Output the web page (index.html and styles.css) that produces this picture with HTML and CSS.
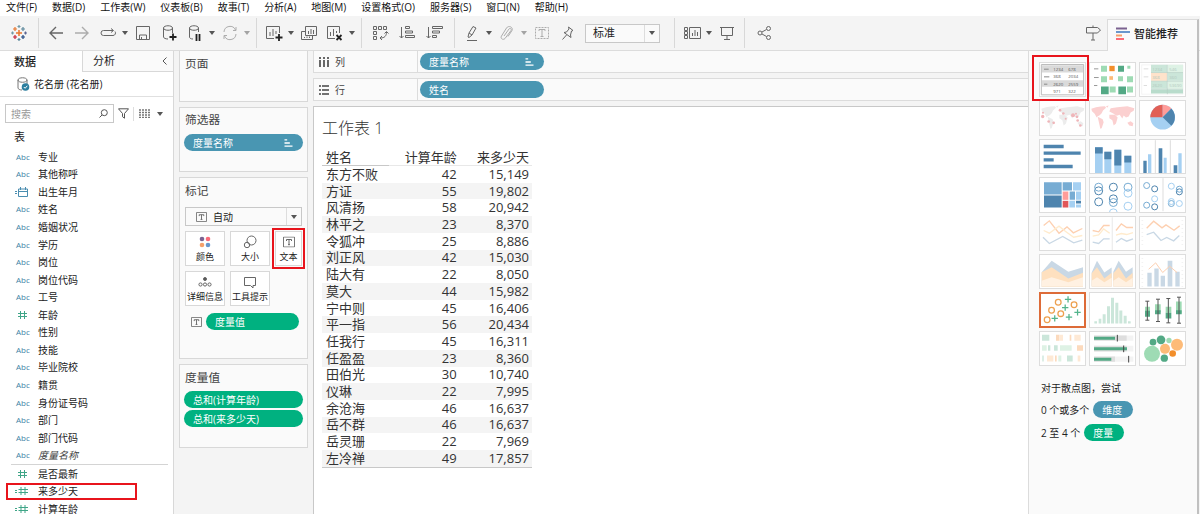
FILE: index.html
```html
<!DOCTYPE html>
<html lang="zh-CN">
<head>
  <meta charset="UTF-8">
  <meta name="viewport" content="width=device-width, initial-scale=1.0">
  <title>工作表 1</title>
  <link rel="stylesheet" href="styles.css">
</head>
<body>
  <svg class="defs" aria-hidden="true">
    <symbol id="i-caret" viewBox="0 0 6 4"><path d="M0 0h6L3 4z" fill="currentColor"/></symbol>
    <symbol id="i-num" viewBox="0 0 14 10"><path d="M5.500 1v8M9.500 1v8M3 3.500h9M3 6.500h9" fill="none" stroke="#3fa587"/></symbol>
    <symbol id="i-calc" viewBox="0 0 14 10"><path d="M6 1v8M10 1v8M3.500 3.500H13M3.500 6.500H13M0 4.500h2M0 6.500h2" fill="none" stroke="#3fa587"/></symbol>
    <symbol id="i-date" viewBox="0 0 14 10"><path d="M3.500 2h9v7.500h-9zM3.500 4.500h9M5.500 0v3M10.500 0v3M0 4.500h2M0 6.500h2" fill="none" stroke="#4a8db0"/></symbol>
    <symbol id="i-text" viewBox="0 0 12 11"><path d="M.5.5h11v10H.5z" fill="none" stroke="#777"/><path d="M3.500 4.500v-1.500h5v1.500M6 3v5M5 8.200h2" fill="none" stroke="#555" stroke-width=".9"/></symbol>
    <symbol id="i-sorted" viewBox="0 0 9 9"><path d="M0 1h3M0 4.500h6M0 8h9" stroke="#fff" stroke-width="1.600"/></symbol>
    <symbol id="i-map" viewBox="0 0 135 99">
      <path d="M4 26l14-5 14-2 13-1 3 5-9 8-4 8-6 6-7 4-2 3-6-11-8-8zM23 50l15 7 3 9-6 18-4 2-4-18zM58 34l4-10 20-3 30-3 21 6-2 8-9 5-6 12-8 3-7-6-4 9-8-11-9 3-9-6zM58 44h17l8 8-5 18-7 6-4-16-9-6zM112 68l10-5 8 6-2 9-10-2zM48 18l8-2-4 7z"/>
    </symbol>
  </svg>

  <nav class="menu">
    <a href="#">文件(F)</a>
    <a href="#">数据(D)</a>
    <a href="#">工作表(W)</a>
    <a href="#">仪表板(B)</a>
    <a href="#">故事(T)</a>
    <a href="#">分析(A)</a>
    <a href="#">地图(M)</a>
    <a href="#">设置格式(O)</a>
    <a href="#">服务器(S)</a>
    <a href="#">窗口(N)</a>
    <a href="#">帮助(H)</a>
  </nav>

  <header class="toolbar">
    <div class="group logo">
      <button class="tool" aria-label="开始">
        <svg viewBox="0 0 18 18" fill="none" stroke-width="1.200">
          <path d="M9 6v6M6 9h6" stroke="#e8762d" stroke-width="1.500"/>
          <path d="M5 3v4M3 5h4" stroke="#e8762d"/><path d="M13 3v4M11 5h4" stroke="#5b879b"/>
          <path d="M5 11v4M3 13h4" stroke="#c72035"/><path d="M13 11v4M11 13h4" stroke="#1f447e"/>
          <path d="M9 1v3M7.500 2.500h3" stroke="#7099a6"/><path d="M9 14v3M7.500 15.500h3" stroke="#59879b"/>
          <path d="M2.500 7.500v3M1 9h3" stroke="#7099a6"/><path d="M15.500 7.500v3M14 9h3" stroke="#5c6692"/>
        </svg>
      </button>
    </div>
    <div class="group">
      <button class="tool" aria-label="后退"><svg viewBox="0 0 18 18"><path d="M16 9H3M9 3L3 9l6 6" stroke-width="1.400"/></svg></button>
      <button class="tool off" aria-label="前进"><svg viewBox="0 0 18 18"><path d="M2 9h13M9 3l6 6-6 6" stroke-width="1.400"/></svg></button>
      <button class="tool" aria-label="重播"><svg viewBox="0 0 18 18"><path d="M14 6.500H4.500a2.500 2.500 0 0 0 0 5H14a2.500 2.500 0 0 0 2-4M12 4.500l2.500 2-2.500 2"/></svg></button>
      <button class="caret" aria-label="重播选项"><svg><use href="#i-caret"/></svg></button>
      <button class="tool" aria-label="保存"><svg viewBox="0 0 18 18"><path d="M2.500 2.500h13v13h-13zM5.500 15v-4h7v4M7.500 13v2"/></svg></button>
      <button class="tool" aria-label="新建数据源"><svg viewBox="0 0 18 18"><path d="M3.500 4v9c0 1 2 2 4.500 2M12.500 9V4M3.500 4c0-3 9-3 9 0s-9 3-9 0"/><path d="M13 9.500v7M9.500 13h7" stroke="#222" stroke-width="1.800"/></svg></button>
      <button class="tool" aria-label="暂停自动更新"><svg viewBox="0 0 18 18"><path d="M3.500 4v9c0 1 1 2 3.500 2M12.500 8V4M3.500 4c0-3 9-3 9 0s-9 3-9 0"/><path d="M10.500 10v7M13.500 10v7" stroke="#222" stroke-width="1.800"/></svg></button>
      <button class="caret" aria-label="更新选项"><svg><use href="#i-caret"/></svg></button>
      <button class="tool off" aria-label="运行更新"><svg viewBox="0 0 18 18"><path d="M3 8a6 6 0 0 1 11.500-2M15 10A6 6 0 0 1 3.500 12M15 3v3.500h-3M3 15v-3.500h3"/></svg></button>
      <button class="caret off" aria-label="运行选项"><svg><use href="#i-caret"/></svg></button>
    </div>
    <div class="group">
      <button class="tool" aria-label="新建工作表"><svg viewBox="0 0 18 18"><path d="M9 14.500H1.500v-12h13V9M5 8v4M8 5v7M11 7v3"/><path d="M14 10v7M10.500 13.500h7" stroke="#222" stroke-width="1.800"/></svg></button>
      <button class="caret" aria-label="新建选项"><svg><use href="#i-caret"/></svg></button>
      <button class="tool" aria-label="复制"><svg viewBox="0 0 18 18"><path d="M5.500 2.500h11v9h-11zM8.500 7v3M11 5v5M13.500 6v4M5 7.500H1.500v8h11V12M4.500 13v1M7 12.500V14M9.500 12.500V14"/></svg></button>
      <button class="tool" aria-label="清除工作表"><svg viewBox="0 0 18 18"><path d="M9 14.500H1.500v-12h12V9M4.500 8v4M7.500 5v7M10.500 7v2"/><path d="M10.500 11l5 5M15.500 11l-5 5" stroke="#222" stroke-width="1.800"/></svg></button>
      <button class="caret" aria-label="清除选项"><svg><use href="#i-caret"/></svg></button>
    </div>
    <div class="group wide">
      <button class="tool" aria-label="交换行和列"><svg viewBox="0 0 18 18"><path d="M1.500 2.500h3v3h-3zM6.500 2.500h3v3h-3zM11.500 2.500h3v3h-3zM1.500 7.500h3v3h-3zM1.500 12.500h3v3h-3zM14.500 8c0 4-2 6-6 6M12.500 9.500l2-2 2 2M10 12l-2 2 2 2"/></svg></button>
      <button class="tool" aria-label="升序排序"><svg viewBox="0 0 18 18"><path d="M2.500 3v11M.5 12l2 2 2-2M6.500 2.500h4v2h-4zM6.500 7h7v2h-7zM6.500 11.500h9v2h-9z"/></svg></button>
      <button class="tool" aria-label="降序排序"><svg viewBox="0 0 18 18"><path d="M2.500 3v11M.5 12l2 2 2-2M6.500 2.500h10v2h-10zM6.500 7h7v2h-7zM6.500 11.500h4v2h-4z"/></svg></button>
    </div>
    <div class="group last-select">
      <button class="tool" aria-label="突出显示"><svg viewBox="0 0 18 18"><path d="M4 16.500h10M5 13l1-4 4-6.500 3 1.500-4 7-3 2.500zM6 9l3 2"/></svg></button>
      <button class="caret" aria-label="突出显示选项"><svg><use href="#i-caret"/></svg></button>
      <button class="tool off" aria-label="分组"><svg viewBox="0 0 18 18"><path d="M6 12l5-7c1-1.500 3 0 2 1.500l-6 8c-2 2-5 0-3.500-2.500l5-8c2-3 7-1 5.500 2.500l-4 6"/></svg></button>
      <button class="caret off" aria-label="分组选项"><svg><use href="#i-caret"/></svg></button>
      <button class="tool off" aria-label="显示标记标签"><svg viewBox="0 0 18 18"><path d="M2.500 3.500h13v11h-13z" stroke-dasharray="2 1"/><path d="M6 7V5.500h6V7M9 5.500v7M7.500 12.500h3"/></svg></button>
      <button class="tool" aria-label="固定轴"><svg viewBox="0 0 18 18"><path d="M9.500 3l4.500 3.500-1.500.5-1 4 .5 2.500-7-5 2.500-.5 2.500-3zM7.500 11l-4 4.500"/></svg></button>
      <div class="pick fit">
        <select aria-label="适合"><option>标准</option></select>
        <span class="pick-arrow"><svg><use href="#i-caret"/></svg></span>
      </div>
    </div>
    <div class="group">
      <button class="tool" aria-label="显示卡"><svg viewBox="0 0 18 18"><path d="M6.500 3.500h11v11h-11zM9.500 9v3M12 6v6M14.500 8v4M1.500 3.500h3v3h-3zM1.500 7.500h3v3h-3zM1.500 11.500h3v3h-3z"/></svg></button>
      <button class="caret" aria-label="显示卡选项"><svg><use href="#i-caret"/></svg></button>
      <button class="tool" aria-label="演示模式"><svg viewBox="0 0 18 18"><path d="M2 3.500h14M3.500 4v7.500h11V4M9 12v4M6 15.500h6"/></svg></button>
    </div>
    <div class="group wide">
      <button class="tool" aria-label="共享"><svg viewBox="0 0 18 18"><circle cx="5" cy="9" r="2"/><circle cx="13.500" cy="4.500" r="2"/><circle cx="13.500" cy="13.500" r="2"/><path d="M7 8l4.500-2.500M7 10l4.500 2.500"/></svg></button>
    </div>
    <button class="tool guide" aria-label="数据指南"><svg viewBox="0 0 18 18"><path d="M2.500 3.500h11l3 2.500-3 3h-11zM9 1.500v2M9 9v7M7 16h4"/></svg></button>
    <button class="showme-tab">
      <svg width="14" height="14" viewBox="0 0 14 14"><path d="M0 1.500h11" stroke="#7b6290" stroke-width="2"/><path d="M0 5h14" stroke="#6a97cc" stroke-width="2"/><path d="M0 8.500h6" stroke="#f6a06a" stroke-width="2"/><path d="M0 12h8" stroke="#fb6a78" stroke-width="2"/></svg>
      智能推荐
    </button>
  </header>

  <div class="workspace">
    <aside class="data-pane">
      <div class="tabs">
        <button class="tab active">数据</button>
        <button class="tab">分析 <svg width="5" height="8" viewBox="0 0 5 8"><path d="M4.500.5L1 4l3.500 3.500" fill="none" stroke="#555"/></svg></button>
      </div>
      <div class="source">
        <svg width="13" height="14" viewBox="0 0 13 14"><path d="M1 3v8c0 1 2 2 4 2M10 7V3M1 3c0-3 9-3 9 0s-9 3-9 0" fill="none" stroke="#777"/><circle cx="8.500" cy="10" r="3.800" fill="#2d7f9f"/><path d="M6.800 10l1.300 1.300 2.200-2.500" fill="none" stroke="#fff"/></svg>
        花名册 (花名册)
      </div>
      <div class="search-row">
        <label class="search">
          <input type="search" placeholder="搜索" aria-label="搜索">
          <svg width="9" height="9" viewBox="0 0 9 9"><circle cx="5.300" cy="3.700" r="3" fill="none" stroke="#555"/><path d="M3 6L.5 8.500" stroke="#555"/></svg>
        </label>
        <button aria-label="筛选"><svg width="11" height="11" viewBox="0 0 11 11"><path d="M.5.8h10L6.500 5.500v4.700l-2-1.500V5.500z" fill="none" stroke="#555"/></svg></button>
        <button class="view" aria-label="视图"><svg width="11" height="9" viewBox="0 0 11 9"><path d="M0 1h11M0 3.500h11M0 6h11M0 8.500h11" stroke="#777" stroke-width="1.500" stroke-dasharray="2 1"/></svg><svg class="arrow"><use href="#i-caret"/></svg></button>
      </div>
      <h2>表</h2>
      <ul class="fields dims">
        <li><span class="abc">Abc</span>专业</li>
        <li><span class="abc">Abc</span>其他称呼</li>
        <li><svg><use href="#i-date"/></svg>出生年月</li>
        <li><span class="abc">Abc</span>姓名</li>
        <li><span class="abc">Abc</span>婚姻状况</li>
        <li><span class="abc">Abc</span>学历</li>
        <li><span class="abc">Abc</span>岗位</li>
        <li><span class="abc">Abc</span>岗位代码</li>
        <li><span class="abc">Abc</span>工号</li>
        <li><svg><use href="#i-num"/></svg>年龄</li>
        <li><span class="abc">Abc</span>性别</li>
        <li><span class="abc">Abc</span>技能</li>
        <li><span class="abc">Abc</span>毕业院校</li>
        <li><span class="abc">Abc</span>籍贯</li>
        <li><span class="abc">Abc</span>身份证号码</li>
        <li><span class="abc">Abc</span>部门</li>
        <li><span class="abc">Abc</span>部门代码</li>
        <li><span class="abc">Abc</span><i>度量名称</i></li>
      </ul>
      <ul class="fields measures">
        <li><svg><use href="#i-num"/></svg>是否最新</li>
        <li class="marked"><svg><use href="#i-calc"/></svg>来多少天</li>
        <li><svg><use href="#i-calc"/></svg>计算年龄</li>
      </ul>
    </aside>

    <section class="cards">
      <div class="card pages"><h3>页面</h3></div>
      <div class="card filters">
        <h3>筛选器</h3>
        <button class="pill blue">度量名称<svg><use href="#i-sorted"/></svg></button>
      </div>
      <div class="card marks">
        <h3>标记</h3>
        <div class="pick mark-type">
          <svg class="t-icon"><use href="#i-text"/></svg>
          <select aria-label="标记类型"><option>自动</option></select>
          <span class="pick-arrow"><svg><use href="#i-caret"/></svg></span>
        </div>
        <div class="mark-buttons">
          <button><svg viewBox="0 0 14 14"><circle cx="4" cy="4" r="2.300" fill="#7b6290"/><circle cx="10" cy="4" r="2.300" fill="#fb6a78"/><circle cx="4" cy="10" r="2.300" fill="#f6a06a"/><circle cx="10" cy="10" r="2.300" fill="#6a97cc"/></svg>颜色</button>
          <button><svg viewBox="0 0 14 14" fill="none" stroke="#666"><circle cx="8.500" cy="5.500" r="4.500"/><circle cx="4" cy="10" r="2.700"/></svg>大小</button>
          <button class="marked"><svg viewBox="0 0 12 11"><use href="#i-text"/></svg>文本</button>
          <button><svg viewBox="0 0 14 14" fill="none" stroke="#666"><circle cx="7" cy="4" r="1.500" fill="#555"/><circle cx="2.500" cy="9.500" r="1.600"/><circle cx="7" cy="9.500" r="1.600"/><circle cx="11.500" cy="9.500" r="1.600"/></svg>详细信息</button>
          <button><svg viewBox="0 0 14 14" fill="none" stroke="#666"><path d="M1.500 2.500h11v8H10v2.500L7.500 10.500h-6z"/></svg>工具提示</button>
        </div>
        <div class="mark-pill">
          <svg class="t-icon"><use href="#i-text"/></svg>
          <button class="pill green">度量值</button>
        </div>
      </div>
      <div class="card values">
        <h3>度量值</h3>
        <button class="pill green">总和(计算年龄)</button>
        <button class="pill green">总和(来多少天)</button>
      </div>
    </section>

    <main class="view-area">
      <div class="shelf">
        <div class="shelf-name"><svg width="10" height="10" viewBox="0 0 10 10"><path d="M1 0v2M5 0v2M9 0v2M1 3v7M5 3v7M9 3v7" stroke="#444" stroke-width="1.600"/></svg>列</div>
        <button class="pill blue">度量名称<svg><use href="#i-sorted"/></svg></button>
      </div>
      <div class="shelf">
        <div class="shelf-name"><svg width="10" height="10" viewBox="0 0 10 10"><path d="M0 1h2M0 5h2M0 9h2M3 1h7M3 5h7M3 9h7" stroke="#444" stroke-width="1.600"/></svg>行</div>
        <button class="pill blue">姓名</button>
      </div>
      <div class="sheet">
        <h1>工作表 1</h1>
        <table>
          <thead><tr><th>姓名</th><th>计算年龄</th><th>来多少天</th></tr></thead>
          <tbody>
            <tr><td>东方不败</td><td>42</td><td>15,149</td></tr>
            <tr><td>方证</td><td>55</td><td>19,802</td></tr>
            <tr><td>风清扬</td><td>58</td><td>20,942</td></tr>
            <tr><td>林平之</td><td>23</td><td>8,370</td></tr>
            <tr><td>令狐冲</td><td>25</td><td>8,886</td></tr>
            <tr><td>刘正风</td><td>42</td><td>15,030</td></tr>
            <tr><td>陆大有</td><td>22</td><td>8,050</td></tr>
            <tr><td>莫大</td><td>44</td><td>15,982</td></tr>
            <tr><td>宁中则</td><td>45</td><td>16,406</td></tr>
            <tr><td>平一指</td><td>56</td><td>20,434</td></tr>
            <tr><td>任我行</td><td>45</td><td>16,311</td></tr>
            <tr><td>任盈盈</td><td>23</td><td>8,360</td></tr>
            <tr><td>田伯光</td><td>30</td><td>10,740</td></tr>
            <tr><td>仪琳</td><td>22</td><td>7,995</td></tr>
            <tr><td>余沧海</td><td>46</td><td>16,637</td></tr>
            <tr><td>岳不群</td><td>46</td><td>16,637</td></tr>
            <tr><td>岳灵珊</td><td>22</td><td>7,969</td></tr>
            <tr><td>左冷禅</td><td>49</td><td>17,857</td></tr>
          </tbody>
        </table>
      </div>
    </main>

    <aside class="showme">
      <div class="charts">
        <button class="marked" aria-label="文本表"><svg viewBox="3 3 135 99">
          <path d="M7 7h127v91H7z" fill="#fff" stroke="#bbb" stroke-width="3"/><path d="M9 9h123v22H9zM9 54h123v20H9z" fill="#dadada"/>
          <path d="M15 21h14M15 44h16M15 66h10" stroke="#888" stroke-width="3"/>
          <g font-size="13" fill="#555"><text x="43" y="25">1234</text><text x="88" y="25">678</text><text x="43" y="48">368</text><text x="88" y="48">2034</text><text x="43" y="70">2620</text><text x="88" y="70">2559</text><text x="43" y="91">971</text><text x="88" y="91">322</text></g>
        </svg></button>
        <button aria-label="热图"><svg viewBox="3 3 135 99">
          <path d="M15 20h13M15 46h14M15 70h10" stroke="#999" stroke-width="3"/>
          <path d="M36 11h18v18H36zM115 11h9v9h-9zM36 42h18v18H36zM87 42h15v15H87zM114 42h18v18h-18zM62 73h18v18H62zM114 73h18v18h-18z" fill="#9edbb4"/>
          <path d="M87 11h18v18H87zM36 73h23v23H36zM88 73h23v23H88z" fill="#53a985"/><path d="M61 11h16v16H61z" fill="#f28e2b"/><path d="M61 42h11v11H61z" fill="#fdbb78"/>
        </svg></button>
        <button aria-label="突出显示表"><svg viewBox="3 3 135 99">
          <path d="M8 8h124v88H8z" fill="#fff" stroke="#eee" stroke-width="2"/><path d="M14 20h14M14 44h14M14 70h10" stroke="#ddd" stroke-width="3"/>
          <path d="M36 8h48v23H36zM36 57h48v23H36zM86 31h46v25H86z" fill="#cbe6d9"/><path d="M86 8h46v22H86zM86 57h46v23H86z" fill="#def2e5"/><path d="M36 32h48v24H36z" fill="#ffe3cb"/><path d="M36 82h96v12H36z" fill="#b9dccc"/>
          <path d="M36 31h96M36 57h96M36 81h96M85 8v88" stroke="#b4cfc2" stroke-width="2"/>
          <g font-size="13" fill="#b3c9be"><text x="40" y="25">1234</text><text x="91" y="25">546</text><text x="40" y="50">368</text><text x="91" y="50">360</text><text x="40" y="75">2620</text><text x="91" y="75">53690</text></g>
        </svg></button>

        <button aria-label="符号地图"><svg viewBox="3 3 135 99"><use href="#i-map" x="3" width="135" height="99" fill="#ececec"/>
          <g fill="#efb5b9"><circle cx="11" cy="49" r="5"/><circle cx="12" cy="38" r="3"/><circle cx="29" cy="64" r="4"/><circle cx="44" cy="68" r="4"/><circle cx="63" cy="30" r="4"/><circle cx="73" cy="40" r="4"/><circle cx="102" cy="45" r="6"/><circle cx="111" cy="41" r="3"/><circle cx="114" cy="50" r="4"/><circle cx="116" cy="61" r="4"/><circle cx="124" cy="76" r="4"/><circle cx="80" cy="56" r="3"/></g></svg></button>
        <button aria-label="填充地图"><svg viewBox="3 3 135 99"><use href="#i-map" x="3" width="135" height="99" fill="#fbd0d0"/></svg></button>
        <button aria-label="饼图"><svg viewBox="3 3 135 99">
          <circle cx="71" cy="51" r="37" fill="#a5d0f2"/><path d="M71 51H34a37 37 0 0 1 37-37z" fill="#e15f56"/><path d="M71 51V14a37 37 0 0 1 26 11z" fill="#ff9d9a"/><path d="M71 51l26-26a37 37 0 0 1 0 52z" fill="#4e84ae"/>
        </svg></button>

        <button aria-label="水平条"><svg viewBox="3 3 135 99"><path d="M14 22h60M14 42h111M14 62h30M14 82h87" stroke="#4e84ae" stroke-width="10"/></svg></button>
        <button aria-label="堆叠条"><svg viewBox="3 3 135 99"><path d="M18 24h23v78H18zM46 38h21v64H46zM76 32h21v70H76zM106 50h21v52h-21z" fill="#a5d0f2"/><path d="M18 24h23v19H18zM46 38h21v22H46zM76 32h21v47H76zM106 50h21v20h-21z" fill="#4e84ae"/></svg></button>
        <button aria-label="并排条"><svg viewBox="3 3 135 99"><path d="M49 3v99M94 3v99" stroke="#ddd" stroke-width="3"/><path d="M13 65h10v37H13zM59 27h11v75H59zM104 78h11v24h-11z" fill="#4e84ae"/><path d="M27 45h10v57H27zM74 56h9v46h-9zM118 42h10v60h-10z" fill="#a5d0f2"/></svg></button>

        <button aria-label="树状图"><svg viewBox="3 3 135 99">
          <path d="M15 15h53v37H15zM71 15h28v25H71zM92 43h16v25H92z" fill="#77acd3"/><path d="M15 55h53v36H15zM111 71h15v8h-15z" fill="#4e84ae"/><path d="M102 15h24v25h-24zM111 43h15v25h-15zM91 71h17v20H91zM111 82h15v9h-15z" fill="#a5d0f2"/><path d="M71 43h17v25H71z" fill="#ff9d9a"/><path d="M71 71h17v20H71z" fill="#e15759"/>
        </svg></button>
        <button aria-label="圆视图"><svg viewBox="3 3 135 99" fill="none" stroke-width="3">
          <g stroke="#4e84ae"><circle cx="29" cy="41" r="12"/><circle cx="29" cy="74" r="12"/><circle cx="73" cy="30" r="12"/><circle cx="73" cy="65" r="12"/></g>
          <g stroke="#77acd3"><circle cx="29" cy="30" r="12"/><circle cx="73" cy="76" r="12"/><circle cx="117" cy="30" r="12"/></g>
          <g stroke="#a5d0f2"><circle cx="73" cy="107" r="12"/><circle cx="117" cy="48" r="12"/><circle cx="117" cy="87" r="12"/></g>
        </svg></button>
        <button aria-label="并排圆"><svg viewBox="3 3 135 99" fill="none" stroke-width="3">
          <path d="M72 3v99" stroke="#ddd"/>
          <g stroke="#4e84ae"><circle cx="47" cy="35" r="9"/><circle cx="47" cy="89" r="9"/><circle cx="121" cy="44" r="9"/></g>
          <g stroke="#77acd3"><circle cx="23" cy="25" r="9"/><circle cx="23" cy="84" r="9"/><circle cx="97" cy="79" r="9"/><circle cx="121" cy="36" r="9"/></g>
          <g stroke="#a5d0f2"><circle cx="47" cy="65" r="9"/><circle cx="97" cy="27" r="9"/><circle cx="97" cy="73" r="9"/><circle cx="121" cy="79" r="9"/></g>
        </svg></button>

        <button aria-label="连续线"><svg viewBox="3 3 135 99" fill="none" stroke-width="4"><path d="M14 28l17-14 29 37 24-19 19 18 27-13" stroke="#fdd0b1"/><path d="M14 43l17 8 29-21 19 15 25 18 26-5" stroke="#ffebcd"/><path d="M12 63l19 19 40-21 33 19 26-8" stroke="#c9d8e5"/></svg></button>
        <button aria-label="离散线"><svg viewBox="3 3 135 99" fill="none" stroke-width="4"><path d="M70 3v99" stroke="#eee"/><path d="M11 43l18 4 15-19h18M81 43l16-20 16 11h19" stroke="#fdd0b1"/><path d="M11 60l18-4 15-18 18 13M81 57l16-5 16 3 19-6" stroke="#ffebcd"/><path d="M11 78l18 4 15-14h18M81 78l16-11 16 8 19-7" stroke="#c9d8e5"/></svg></button>
        <button aria-label="双线"><svg viewBox="3 3 135 99" fill="none" stroke-width="4"><path d="M10 12v82M130 12v82" stroke="#e6e6e6" stroke-width="5" stroke-dasharray="2 10"/><path d="M23 36l21-21 25 20 12-9 24 16 17-13" stroke="#fdd0b1"/><path d="M23 55l21-7 22 25 17-9 21 10 17-16" stroke="#c9d8e5"/></svg></button>

        <button aria-label="连续区域"><svg viewBox="3 3 135 99"><path d="M8 54l30-34 50 33 44-14v59H8z" fill="#c9d8e5"/><path d="M8 54l30-15 50 34 44-17v42H8z" fill="#fee0bf"/><path d="M8 80l30-11 50 15 44-15v28H8z" fill="#fff1e2"/></svg></button>
        <button aria-label="离散区域"><svg viewBox="3 3 135 99"><path d="M8 55l16-35 22 35 22-15v57H8zM73 53l16-33 22 33 20-14v58H73z" fill="#c9d8e5"/><path d="M8 57l16-18 22 34 22-17v41H8zM73 57l16-18 22 34 20-17v41H73z" fill="#fee0bf"/><path d="M8 80l16-11 22 15 22-13v26H8zM73 80l16-11 22 15 20-13v26H73z" fill="#fff1e2"/></svg></button>
        <button aria-label="双组合"><svg viewBox="3 3 135 99"><path d="M10 12v86M130 12v86" stroke="#e6e6e6" stroke-width="5" stroke-dasharray="2 10"/><path d="M25 56h13v41H25zM46 43h13v54H46zM65 65h13v32H65zM86 20h14v77H86zM109 53h13v44h-13z" fill="#c9d8e5"/><path d="M29 45l21-19 21 29 21-19 22 19" fill="none" stroke="#fdd0b1" stroke-width="3"/></svg></button>

        <button class="chosen" aria-label="散点图"><svg viewBox="3 3 135 99" fill="none" stroke-width="4">
          <g stroke="#eda04f"><circle cx="22" cy="84" r="9"/><circle cx="36" cy="54" r="9"/><circle cx="57" cy="29" r="9"/><circle cx="65" cy="65" r="9"/><circle cx="107" cy="37" r="9"/></g>
          <path d="M88 10v20M78 20h20M79 36v20M69 46h20M46 70v20M36 80h20M118 51v20M108 61h20M91 66v20M81 76h20" stroke="#53b48c"/>
        </svg></button>
        <button aria-label="直方图"><svg viewBox="3 3 135 99"><path d="M16 87h8v7h-8zM29 80h8v14h-8zM41 66h9v28h-9zM54 42h9v52h-9zM66 17h9v77h-9zM79 32h9v62h-9zM91 55h9v39h-9zM104 71h9v23h-9zM117 87h8v7h-8z" fill="#cbe6da"/></svg></button>
        <button aria-label="盒须图"><svg viewBox="3 3 135 99">
          <path d="M18 44h15v20H18zM48 36h17v24H48zM80 44h17v18H80zM111 28h17v36h-17z" fill="#9edbb4"/><path d="M18 56h15v18H18zM48 54h17v12H48zM80 62h17v17H80zM111 54h17v12h-17z" fill="#53a985"/>
          <path d="M25 27v57M19 27h12M19 84h12M57 21v67M51 21h12M51 88h12M88 19v73M82 19h12M82 92h12M120 15v78M114 15h12M114 93h12" fill="none" stroke="#555" stroke-width="3"/>
        </svg></button>

        <button aria-label="甘特图"><svg viewBox="3 3 135 99"><path d="M9 11h22v18H9zM27 42h7v17h-7zM45 42h11v17H45zM10 73h4v18h-4zM84 73h17v18H84z" fill="#cbe6da"/><path d="M9 42h14v17H9zM63 42h35v17H63zM58 73h9v18h-9z" fill="#def2e5"/><path d="M51 11h10v18H51zM92 11h5v18h-5zM114 42h18v17h-18zM48 73h5v18h-5z" fill="#fcdabd"/><path d="M61 11h11v18H61zM106 11h19v18h-19zM24 73h19v18H24zM116 73h8v18h-8z" fill="#fee9d5"/></svg></button>
        <button aria-label="标靶图"><svg viewBox="3 3 135 99"><path d="M15 13h118v16H15zM15 44h118v17H15zM15 76h118v16H15z" fill="#f3f3f3"/><path d="M15 13h98v16H15zM15 44h98v17H15zM15 76h63v16H15z" fill="#dedede"/><path d="M15 21h63M15 53h99M15 84h52" stroke="#53a985" stroke-width="9"/><path d="M85 11v20M104 43v20M119 74v20" stroke="#444" stroke-width="3"/></svg></button>
        <button aria-label="填充气泡图"><svg viewBox="3 3 135 99">
          <g fill="#53a985"><circle cx="42" cy="33" r="10"/><circle cx="66" cy="26" r="13"/><circle cx="76" cy="81" r="11"/></g><circle cx="39" cy="68" r="24" fill="#9edbb4"/><circle cx="90" cy="28" r="8" fill="#9edbb4"/><circle cx="78" cy="53" r="15" fill="#fdbb78"/><circle cx="114" cy="41" r="18" fill="#fdbb78"/><circle cx="101" cy="67" r="10" fill="#f28e2b"/>
        </svg></button>
      </div>
      <div class="hint">
        <p>对于散点图，尝试</p>
        <p>0 个或多个 <span class="pill blue">维度</span></p>
        <p>2 至 4 个 <span class="pill green">度量</span></p>
      </div>
    </aside>
  </div>
</body>
</html>
```
FILE: styles.css
```css
*,
*::after {
  box-sizing: border-box;
}

body {
  margin: 0;
  height: 100vh;
  overflow: hidden;
  display: flex;
  flex-direction: column;
  font: 10px/16px "Open Sans", "Noto Sans CJK SC", sans-serif;
  color: #222;
  background: #f4f4f4;
}

button,
select,
input {
  font: inherit;
  color: inherit;
  border: 0;
  padding: 0;
  margin: 0;
  background: none;
}

button {
  cursor: pointer;
}

svg {
  display: block;
  flex: none;
}

h1,
h2,
h3,
p,
ul {
  margin: 0;
  padding: 0;
  font-weight: normal;
}

.defs {
  display: none;
}

/* menu */
.menu {
  display: flex;
  gap: 15px;
  padding: 0 6px;
  height: 16px;
  line-height: 14px;
  background: #fff;
}

.menu a {
  color: #111;
  text-decoration: none;
}

/* toolbar */
.toolbar {
  display: flex;
  align-items: center;
  height: 35px;
  flex: none;
  border-bottom: 1px solid #dcdcdc;
}

.group {
  display: flex;
  align-items: center;
  gap: 8px;
  height: 30px;
  padding: 0 8px;
}

.group + .group {
  border-left: 1px solid #d8d8d8;
}

.group.logo {
  padding: 0 10px;
}

.group.wide {
  gap: 9px;
  padding: 0 10px;
}

.group.last-select {
  padding-right: 14px;
}

.tool svg {
  width: 18px;
  height: 18px;
  fill: none;
  stroke: #666;
}

.caret {
  margin: 0 -2px 0 -3px;
  color: #555;
}

.caret svg,
.pick-arrow svg,
.arrow {
  width: 6px;
  height: 4px;
}

.off {
  opacity: 0.5;
}

.pick {
  display: flex;
  align-items: center;
  height: 19px;
  border: 1px solid #c8c8c8;
  background: #fafafa;
}

.pick select {
  flex: 1;
  min-width: 0;
  appearance: none;
}

.pick-arrow {
  display: flex;
  align-items: center;
  justify-content: center;
  width: 15px;
  height: 100%;
  border-left: 1px solid #ddd;
  color: #555;
}

.fit {
  width: 75px;
  padding-left: 7px;
  font-size: 11px;
}

.guide {
  margin-left: auto;
  margin-right: 5px;
}

.showme-tab {
  display: flex;
  align-items: center;
  gap: 4px;
  align-self: flex-end;
  height: 32px;
  width: 92px;
  margin: 0 1px -1px 0;
  padding: 0 8px 4px;
  border: 1px solid #dcdcdc;
  border-width: 1px 2px 0 1px;
  border-right-color: #c0c0c0;
  background: #fafafa;
  font-size: 11px;
  font-weight: 500;
  white-space: nowrap;
}

/* workspace */
.workspace {
  flex: 1;
  min-height: 0;
  display: grid;
  grid-template-columns: 174px 138px 1fr 172px;
}

.data-pane {
  min-height: 0;
  overflow: hidden;
  background: #fff;
  border-right: 1px solid #d8d8d8;
}

.tabs {
  display: flex;
  height: 21px;
}

.tab {
  flex: 1;
  display: flex;
  align-items: center;
  justify-content: space-between;
  padding: 0 6px 0 10px;
  border: 1px solid #d8d8d8;
  border-width: 0 0 1px 1px;
  background: #fafafa;
  font-size: 11px;
}

.tab.active {
  flex: 0 0 82px;
  padding-left: 14px;
  border: 0;
  background: #fff;
  font-weight: 500;
}

.source {
  display: flex;
  align-items: center;
  gap: 4px;
  height: 25px;
  padding-left: 17px;
  border-bottom: 1px solid #e0e0e0;
}

.search-row {
  display: flex;
  align-items: center;
  padding: 7px 10px 0 5px;
}

.search {
  display: flex;
  align-items: center;
  width: 109px;
  height: 19px;
  padding: 0 5px;
  border: 1px solid #c8c8c8;
}

.search input {
  flex: 1;
  min-width: 0;
  outline: 0;
}

.search input::placeholder {
  color: #999;
}

.search-row button {
  margin-left: 4px;
}

.search-row .view {
  display: flex;
  align-items: center;
  gap: 7px;
  height: 14px;
  padding-left: 5px;
  border-left: 1px solid #ddd;
  color: #555;
}

h2 {
  padding: 5px 14px 2px;
  font-size: 11px;
  line-height: 18px;
}

.fields {
  display: grid;
  grid-auto-rows: 1fr;
  list-style: none;
}

.dims {
  height: 316px;
}

.measures {
  height: 54px;
  margin: 0 5px 0 11px;
  border-top: 1px solid #d4d4d4;
}

.fields li {
  position: relative;
  display: flex;
  align-items: center;
  gap: 6px;
  padding-left: 15px;
}

.measures li {
  padding-left: 4px;
}

.fields svg {
  width: 14px;
  height: 10px;
  margin-right: 3px;
}

.fields i {
  color: #444;
}

.abc {
  width: 17px;
  padding-left: 1px;
  font-size: 8px;
  color: #3d82a5;
}

/* red frames */
.marked {
  position: relative;
}

.marked::after {
  content: "";
  position: absolute;
  z-index: 1;
  inset: -4px;
  border: 2px solid #e8141c;
  pointer-events: none;
}

.fields .marked::after {
  inset: 0 auto 0 -5px;
  width: 131px;
}

.charts .marked::after {
  inset: -8px -4px -5px -8px;
}

/* cards */
.cards {
  display: flex;
  flex-direction: column;
  gap: 5px;
  padding: 0 4px 0 5px;
}

.card {
  flex: none;
  padding: 4px;
  border: 1px solid #d8d8d8;
  background: #fafafa;
}

.pages {
  height: 51px;
  border-top: 0;
}

.filters {
  height: 65px;
  padding-top: 3px;
}

.marks {
  height: 182px;
}

.values {
  height: 84px;
}

.card h3 {
  padding-left: 1px;
  line-height: 17px;
  color: #444;
}

.pill {
  display: flex;
  align-items: center;
  justify-content: space-between;
  width: 100%;
  height: 17px;
  padding: 0 10px 0 9px;
  border-radius: 9px;
  color: #fff;
}

.pill svg {
  width: 9px;
  height: 8px;
}

.blue {
  background: #4996b2;
}

.green {
  background: #00b180;
}

.filters .pill {
  margin-top: 6px;
}

.values h3 {
  margin-bottom: 5px;
}

.values .pill + .pill {
  margin-top: 2px;
}

.mark-type {
  margin: 8px 1px 5px;
  padding-left: 10px;
  gap: 6px;
}

.t-icon {
  width: 11px;
  height: 10px;
}

.mark-buttons {
  display: grid;
  grid-template-columns: 40px 40px 1fr;
  gap: 5px;
  padding: 0 1px;
}

.mark-buttons button {
  display: flex;
  flex-direction: column;
  align-items: center;
  height: 35px;
  padding-top: 3px;
  border: 1px solid #d8d8d8;
  background: #fff;
  font-size: 9px;
  line-height: 15px;
  white-space: nowrap;
}

.mark-buttons svg {
  width: 14px;
  height: 14px;
}

.mark-buttons .marked svg {
  width: 12px;
}

.mark-pill {
  display: flex;
  align-items: center;
  gap: 4px;
  padding: 7px 4px 0 7px;
}

/* view */
.view-area {
  min-width: 0;
  display: flex;
  flex-direction: column;
  gap: 5px;
  padding-left: 1px;
}

.shelf {
  display: flex;
  align-items: center;
  gap: 2px;
  height: 23px;
  flex: none;
  border: 1px solid #dcdcdc;
  border-right: 0;
  background: #fafafa;
}

.shelf:first-child {
  height: 22px;
  border-top: 0;
}

.shelf-name {
  display: flex;
  align-items: center;
  gap: 6px;
  width: 104px;
  height: 100%;
  padding-left: 5px;
  border-right: 1px solid #dcdcdc;
  color: #444;
}

.shelf .pill {
  width: 124px;
}

.sheet {
  flex: 1;
  min-height: 0;
  padding: 10px 8px;
  border: 1px solid #c8c8c8;
  border-width: 1px 0 0 1px;
  background: #fff;
}

h1 {
  font-size: 16px;
  line-height: 22px;
  font-weight: 300;
  color: #333;
}

table {
  width: 210px;
  height: 318px;
  margin-top: 11px;
  border-collapse: collapse;
  border-bottom: 1px solid #c8c8c8;
  font-size: 13px;
  line-height: 15px;
  color: #333;
}

th,
td {
  padding: 0 3px;
  font-weight: normal;
  text-align: right;
}

th:first-child,
td:first-child {
  width: 67px;
  padding-left: 4px;
  text-align: left;
  white-space: nowrap;
}

th:nth-child(2),
td:nth-child(2) {
  padding-right: 5px;
}

th {
  border-bottom: 1px solid #e8e8e8;
}

th:first-child {
  border-bottom-color: #c8c8c8;
}

tbody tr:nth-child(even) {
  background: #f4f4f4;
}

/* show me */
.showme {
  margin-right: 1px;
  padding: 11px 0 0 10px;
  border: 1px solid #dcdcdc;
  border-width: 0 2px 0 1px;
  border-right-color: #c0c0c0;
  background: #fafafa;
}

.charts {
  display: grid;
  grid-template-columns: repeat(3, 47px);
  grid-auto-rows: 1fr;
  gap: 3px;
  height: 304px;
}

.charts button {
  min-height: 0;
  border: 1px solid #ddd;
  background: #fff;
}

.charts svg {
  width: 100%;
  height: 100%;
}

.charts .chosen {
  border: 2px solid #dd6b38;
}

.hint {
  padding: 12px 2px;
  color: #222;
}

.hint p {
  display: flex;
  align-items: center;
  gap: 4px;
  height: 23px;
}

.hint p:first-child {
  height: 20px;
}

.hint .pill {
  width: 40px;
}
```
